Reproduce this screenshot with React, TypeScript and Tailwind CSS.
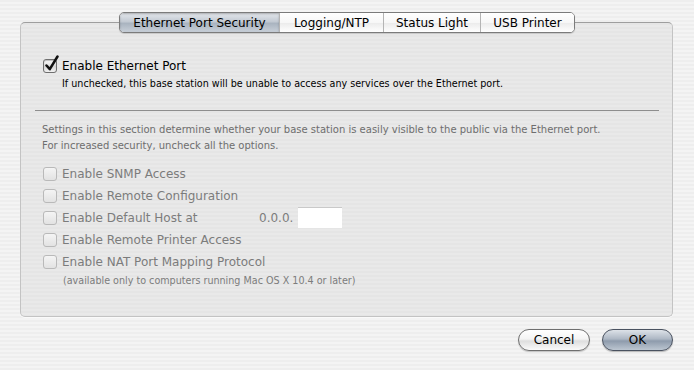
import React from 'react';

const font = { fontFamily: '"DejaVu Sans", "Liberation Sans", sans-serif' };

const Check: React.FC<{ checked?: boolean; disabled?: boolean }> = ({ checked, disabled }) => (
  <span className="relative inline-block w-[14px] h-[14px] shrink-0">
    <span
      className={`absolute inset-0 rounded-[3px] border ${
        disabled
          ? 'border-[#b9b9b9] bg-[linear-gradient(#f4f4f4,#e2e2e2)]'
          : 'border-[#6f6f6f] bg-[linear-gradient(#ffffff,#d9d9d9_55%,#f0f0f0)] shadow-[inset_0_1px_1px_rgba(0,0,0,0.25)]'
      }`}
    />
    {checked && (
      <svg className="absolute left-[1px] top-[-4px]" width="16" height="17" viewBox="0 0 16 17">
        <path d="M2.5 10.5 L5.8 14.2 L13.5 1.5" fill="none" stroke="#111" strokeWidth="2.5" strokeLinecap="round" strokeLinejoin="round" />
      </svg>
    )}
  </span>
);

const tabs = [
  { label: 'Ethernet Port Security', w: 'w-[159px]', active: true },
  { label: 'Logging/NTP', w: 'w-[104px]' },
  { label: 'Status Light', w: 'w-[97px]' },
  { label: 'USB Printer', w: 'w-[94px]' },
];

const options = [
  'Enable SNMP Access',
  'Enable Remote Configuration',
  'Enable Default Host at',
  'Enable Remote Printer Access',
  'Enable NAT Port Mapping Protocol',
];

export default function App() {
  return (
    <div
      className="w-[694px] h-[370px] flex flex-col bg-[repeating-linear-gradient(to_bottom,#eeeeee_0px,#eeeeee_2px,#f4f4f4_2px,#f4f4f4_4px)] text-black"
      style={font}
    >
      {/* tabs */}
      <div className="relative z-10 mt-[12px] h-[21px] flex justify-center">
        <div className="flex rounded-[5px] border border-[#7b7b7b] overflow-hidden bg-white shadow-[0_1px_1px_rgba(0,0,0,0.15)]">
          {tabs.map((t, i) => (
            <div
              key={t.label}
              className={`${t.w} h-[19px] flex items-center justify-center text-[12px] ${
                i > 0 ? 'border-l border-[#b4b4b4]' : ''
              } ${
                t.active
                  ? 'bg-[linear-gradient(#e4e8ec,#c3cad3_45%,#aab4c0_55%,#c8cfd8)] shadow-[inset_0_1px_2px_rgba(0,0,0,0.25)]'
                  : 'bg-[linear-gradient(#ffffff,#f7f7f7_50%,#ececec_55%,#ffffff)]'
              }`}
            >
              {t.label}
            </div>
          ))}
        </div>
      </div>

      {/* panel */}
      <div className="ml-[20px] mt-[-11px] w-[653px] h-[295px] rounded-[5px] border border-[#c3c3c3] border-t-[#9e9e9e] bg-[repeating-linear-gradient(to_bottom,#e5e5e5_0px,#e5e5e5_2px,#e9e9e9_2px,#e9e9e9_4px)] shadow-[0_1px_1px_rgba(255,255,255,0.8)] pl-[22px] pt-[34px]">
        <div className="flex items-center gap-[5px] h-[18px] text-[12px]">
          <Check checked />
          <span>Enable Ethernet Port</span>
        </div>
        <div className="mt-[2px] ml-[19px] h-[14px] leading-[14px] text-[9.6px]">
          If unchecked, this base station will be unable to access any services over the Ethernet port.
        </div>

        <div className="mt-[19px] ml-[-8px] w-[624px] h-px bg-[#8e8e8e]" />

        <div className="mt-[11px] text-[10px] leading-[16px] text-[#6e6e6e] ml-[-1px]">
          <div>Settings in this section determine whether your base station is easily visible to the public via the Ethernet port.</div>
          <div>For increased security, uncheck all the options.</div>
        </div>

        <div className="mt-[11px] flex flex-col gap-[4px] text-[12px] text-[#7c7c7c]">
          {options.map((o, i) => (
            <div key={o} className="flex items-center gap-[5px] h-[18px]">
              <Check disabled />
              {i === 2 ? (
                <>
                  <span className="w-[192px]">{o}</span>
                  <span>0.0.0.</span>
                  <span className="mt-[-2px] w-[44px] h-[21px] bg-white border-t border-[#c9c9c9]" />
                </>
              ) : (
                <span>{o}</span>
              )}
            </div>
          ))}
        </div>
        <div className="mt-[3px] ml-[20px] text-[9.6px] text-[#7c7c7c] leading-[14px]">
          (available only to computers running Mac OS X 10.4 or later)
        </div>
      </div>

      {/* buttons */}
      <div className="mt-[12px] w-[673px] flex justify-end gap-[12px] text-[12px]">
        <button className="w-[72px] h-[22px] rounded-full border border-[#6f6f6f] bg-[linear-gradient(#ffffff,#f4f4f4_45%,#dedede_55%,#fafafa)] shadow-[0_1px_1px_rgba(0,0,0,0.2)]">
          Cancel
        </button>
        <button className="w-[71px] h-[22px] rounded-full border border-[#4a5260] bg-[linear-gradient(#dde2e8,#adb7c4_45%,#8e9bac_55%,#bcc6d1)] shadow-[0_1px_1px_rgba(0,0,0,0.25)]">
          OK
        </button>
      </div>
    </div>
  );
}
